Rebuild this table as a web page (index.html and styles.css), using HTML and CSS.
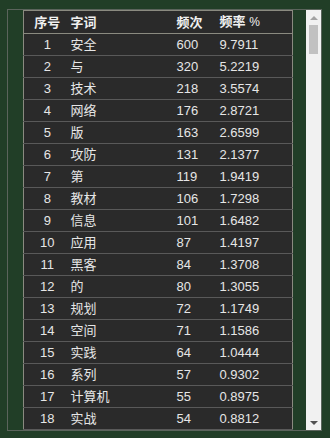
FILE: index.html
```html
<!DOCTYPE html>
<html lang="zh">
<head>
<meta charset="utf-8">
<link rel="stylesheet" href="styles.css">
</head>
<body>
<div class="panel">
  <div class="scroll-area">
    <table class="freq">
      <colgroup>
        <col class="c-idx"><col class="c-word"><col class="c-cnt"><col class="c-rate">
      </colgroup>
      <thead>
        <tr><th class="idx">序号</th><th>字词</th><th>频次</th><th>频率 <span class="pct">%</span></th></tr>
      </thead>
      <tbody>
        <tr><td class="idx">1</td><td>安全</td><td>600</td><td>9.7911</td></tr>
        <tr><td class="idx">2</td><td>与</td><td>320</td><td>5.2219</td></tr>
        <tr><td class="idx">3</td><td>技术</td><td>218</td><td>3.5574</td></tr>
        <tr><td class="idx">4</td><td>网络</td><td>176</td><td>2.8721</td></tr>
        <tr><td class="idx">5</td><td>版</td><td>163</td><td>2.6599</td></tr>
        <tr><td class="idx">6</td><td>攻防</td><td>131</td><td>2.1377</td></tr>
        <tr><td class="idx">7</td><td>第</td><td>119</td><td>1.9419</td></tr>
        <tr><td class="idx">8</td><td>教材</td><td>106</td><td>1.7298</td></tr>
        <tr><td class="idx">9</td><td>信息</td><td>101</td><td>1.6482</td></tr>
        <tr><td class="idx">10</td><td>应用</td><td>87</td><td>1.4197</td></tr>
        <tr><td class="idx">11</td><td>黑客</td><td>84</td><td>1.3708</td></tr>
        <tr><td class="idx">12</td><td>的</td><td>80</td><td>1.3055</td></tr>
        <tr><td class="idx">13</td><td>规划</td><td>72</td><td>1.1749</td></tr>
        <tr><td class="idx">14</td><td>空间</td><td>71</td><td>1.1586</td></tr>
        <tr><td class="idx">15</td><td>实践</td><td>64</td><td>1.0444</td></tr>
        <tr><td class="idx">16</td><td>系列</td><td>57</td><td>0.9302</td></tr>
        <tr><td class="idx">17</td><td>计算机</td><td>55</td><td>0.8975</td></tr>
        <tr><td class="idx">18</td><td>实战</td><td>54</td><td>0.8812</td></tr>
      </tbody>
    </table>
  </div>
  <div class="scrollbar">
    <div class="arrow up"></div>
    <div class="track"><div class="thumb"></div></div>
    <div class="arrow down"></div>
  </div>
</div>
</body>
</html>
```
FILE: styles.css
```css
html, body {
  margin: 0;
  padding: 0;
  background: #213e27;
}
body {
  padding: 9px 0 0 7px;
  font-family: "Liberation Sans", "Noto Sans CJK SC", sans-serif;
  font-size: 13px;
  color: #e6e6e6;
}
.panel {
  width: 313px;
  height: 420px;
  border: 1px solid #5b645c;
  display: flex;
  overflow: hidden;
}
.scroll-area {
  flex: 1;
  padding: 0 14px 0 15px;
  overflow: hidden;
}
.freq {
  width: 269px;
  border-collapse: collapse;
  table-layout: fixed;
  background: #2a2a2a;
  border: 1px solid #8a8a80;
}
.c-idx { width: 47px; }
.c-word { width: 106px; }
.c-cnt { width: 43px; }
.c-rate { width: 73px; }
.freq th, .freq td {
  padding: 0;
  text-align: left;
  white-space: nowrap;
  line-height: 21px;
  height: 21px;
}
.freq th {
  font-weight: bold;
  height: 22px;
  color: #f0f0f0;
  border-bottom: 1px solid #8a8a80;
}
.freq td {
  border-bottom: 1px solid #595959;
}
.freq .idx {
  text-align: center;
}
.pct {
  font-weight: normal;
  font-size: 12px;
}
.scrollbar {
  width: 15px;
  background: #f1f1f1;
  display: flex;
  flex-direction: column;
}
.arrow {
  height: 15px;
  display: flex;
  align-items: center;
  justify-content: center;
}
.arrow.up::before {
  content: "";
  border-left: 4px solid transparent;
  border-right: 4px solid transparent;
  border-bottom: 4px solid #a3a3a3;
}
.arrow.down::before {
  content: "";
  border-left: 4px solid transparent;
  border-right: 4px solid transparent;
  border-top: 4px solid #505050;
}
.track {
  flex: 1;
  display: flex;
  justify-content: center;
}
.thumb {
  width: 9px;
  height: 29px;
  background: #c1c1c1;
}
```
